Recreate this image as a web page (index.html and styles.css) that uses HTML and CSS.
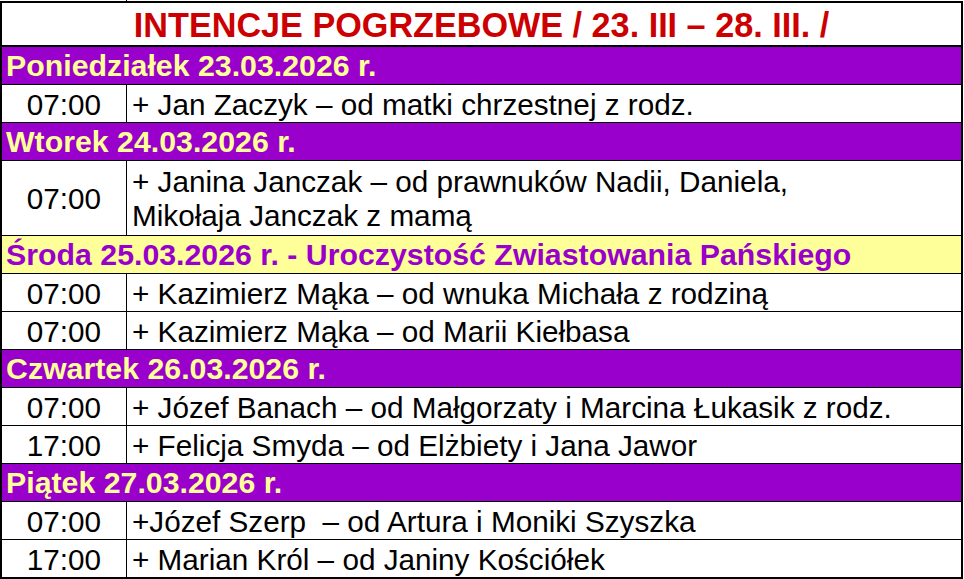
FILE: index.html
```html
<!DOCTYPE html>
<html lang="pl">
<head>
<meta charset="utf-8">
<title>Intencje pogrzebowe</title>
<link rel="stylesheet" href="styles.css">
</head>
<body>
<div class="sliver"><span class="sliver-line"></span></div>
<div class="sheet">
  <div class="title">INTENCJE POGRZEBOWE / 23. III – 28. III. /</div>

  <div class="row day">Poniedziałek 23.03.2026 r.</div>
  <div class="row"><div class="time">07:00</div><div class="text">+ Jan Zaczyk – od matki chrzestnej z rodz.</div></div>

  <div class="row day">Wtorek 24.03.2026 r.</div>
  <div class="row double"><div class="time">07:00</div><div class="text">+ Janina Janczak – od prawnuków Nadii, Daniela,<br>Mikołaja Janczak z mamą</div></div>

  <div class="row day feast">Środa 25.03.2026 r. - Uroczystość Zwiastowania Pańskiego</div>
  <div class="row"><div class="time">07:00</div><div class="text">+ Kazimierz Mąka – od wnuka Michała z rodziną</div></div>
  <div class="row"><div class="time">07:00</div><div class="text">+ Kazimierz Mąka – od Marii Kiełbasa</div></div>

  <div class="row day">Czwartek 26.03.2026 r.</div>
  <div class="row"><div class="time">07:00</div><div class="text">+ Józef Banach – od Małgorzaty i Marcina Łukasik z rodz.</div></div>
  <div class="row"><div class="time">17:00</div><div class="text">+ Felicja Smyda – od Elżbiety i Jana Jawor</div></div>

  <div class="row day">Piątek 27.03.2026 r.</div>
  <div class="row"><div class="time">07:00</div><div class="text">+Józef Szerp&nbsp; – od Artura i Moniki Szyszka</div></div>
  <div class="row last"><div class="time">17:00</div><div class="text">+ Marian Król – od Janiny Kościółek</div></div>
</div>
</body>
</html>
```

FILE: styles.css
```css
html, body {
  margin: 0;
  padding: 0;
  background: #ffffff;
}

body {
  font-family: "Liberation Sans", Arial, sans-serif;
  color: #000000;
}

.sliver {
  height: 1px;
  padding-left: 126px;
  display: flex;
}

.sliver-line {
  width: 1px;
  height: 1px;
  background: #000000;
}

.sheet {
  width: 963px;
  box-sizing: border-box;
  border: 2px solid #000000;
  display: flex;
  flex-direction: column;
}

.title {
  height: 41px;
  padding-top: 1px;
  border-bottom: 2px solid #000000;
  text-align: center;
  font-weight: bold;
  font-size: 34.2px;
  line-height: 42px;
  color: #cc0000;
  white-space: nowrap;
}

.row {
  display: flex;
  height: 37px;
  border-bottom: 1px solid #000000;
  font-size: 29.7px;
  line-height: 34px;
  white-space: nowrap;
}

.row.last {
  border-bottom: none;
}

.row.double {
  height: 74px;
}

.day {
  background: #9900cc;
  color: #ffff99;
  font-weight: bold;
  font-size: 30.3px;
  padding-left: 4px;
  align-items: center;
}

.day.feast {
  background: #ffff99;
  color: #9900cc;
}

.time {
  width: 125px;
  box-sizing: border-box;
  flex: none;
  border-right: 1px solid #000000;
  display: flex;
  align-items: center;
  justify-content: center;
  padding-top: 2px;
}

.text {
  display: flex;
  align-items: center;
  padding-left: 5px;
  padding-top: 2px;
}
```
